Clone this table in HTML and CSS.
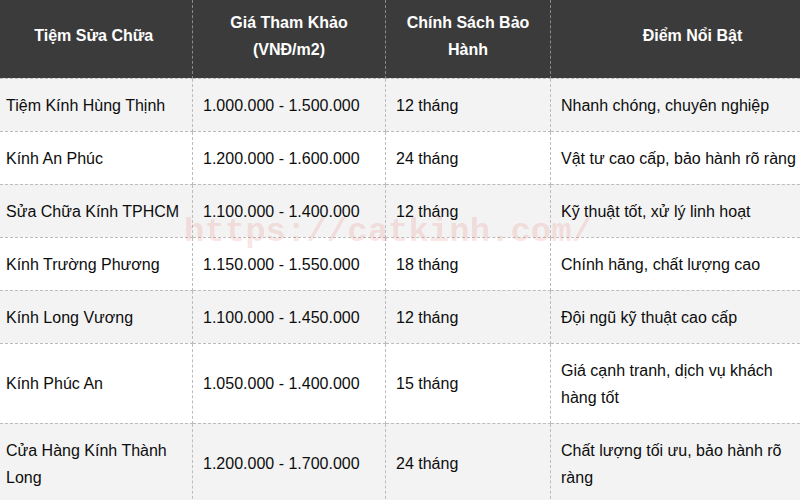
FILE: index.html
```html
<!DOCTYPE html>
<html lang="vi">
<head>
<meta charset="utf-8">
<link rel="stylesheet" href="styles.css">
</head>
<body>
<div class="wrap">
<table class="tbl">
  <colgroup>
    <col class="c1"><col class="c2"><col class="c3"><col class="c4">
  </colgroup>
  <thead>
    <tr>
      <th>Tiệm Sửa Chữa</th>
      <th>Giá Tham Khảo<br>(VNĐ/m2)</th>
      <th>Chính Sách Bảo<br>Hành</th>
      <th>Điểm Nổi Bật</th>
    </tr>
  </thead>
  <tbody>
    <tr><td>Tiệm Kính Hùng Thịnh</td><td>1.000.000 - 1.500.000</td><td>12 tháng</td><td>Nhanh chóng, chuyên nghiệp</td></tr>
    <tr><td>Kính An Phúc</td><td>1.200.000 - 1.600.000</td><td>24 tháng</td><td>Vật tư cao cấp, bảo hành rõ ràng</td></tr>
    <tr><td>Sửa Chữa Kính TPHCM</td><td>1.100.000 - 1.400.000</td><td>12 tháng</td><td>Kỹ thuật tốt, xử lý linh hoạt</td></tr>
    <tr><td>Kính Trường Phương</td><td>1.150.000 - 1.550.000</td><td>18 tháng</td><td>Chính hãng, chất lượng cao</td></tr>
    <tr><td>Kính Long Vương</td><td>1.100.000 - 1.450.000</td><td>12 tháng</td><td>Đội ngũ kỹ thuật cao cấp</td></tr>
    <tr><td>Kính Phúc An</td><td>1.050.000 - 1.400.000</td><td>15 tháng</td><td>Giá cạnh tranh, dịch vụ khách<br>hàng tốt</td></tr>
    <tr><td>Cửa Hàng Kính Thành<br>Long</td><td>1.200.000 - 1.700.000</td><td>24 tháng</td><td>Chất lượng tối ưu, bảo hành rõ<br>ràng</td></tr>
  </tbody>
</table>
<div class="watermark">https://catkinh.com/</div>
</div>
</body>
</html>
```

FILE: styles.css
```css
html, body {
  margin: 0;
  padding: 0;
  background: #ffffff;
  overflow: hidden;
}
.wrap {
  position: relative;
  width: 800px;
  height: 500px;
  overflow: hidden;
}
.tbl {
  margin-left: -5px;
  width: 839px;
  border-collapse: collapse;
  table-layout: fixed;
  font-family: "Liberation Sans", Arial, sans-serif;
  font-size: 16px;
  line-height: 27px;
  color: #0d0d0d;
}
.c1 { width: 197px; }
.c2 { width: 193px; }
.c3 { width: 165px; }
.c4 { width: 284px; }
.tbl th {
  background: #3b3b3b;
  color: #ffffff;
  font-weight: bold;
  text-align: center;
  vertical-align: middle;
  height: 78px;
  box-sizing: border-box;
  padding: 4px 10px 10px 10px;
  border-right: 1px dashed #8a8a8a;
  border-bottom: 1px dashed #bdbdbd;
}
.tbl td {
  padding: 13px 10px 12px 10px;
  vertical-align: middle;
  text-align: left;
  border: 1px dashed #bcbcbc;
  white-space: nowrap;
}
.tbl tbody tr:nth-child(odd) td {
  background: #f3f3f3;
}
.tbl tbody tr:nth-child(even) td {
  background: #ffffff;
}
.watermark {
  position: absolute;
  left: 184px;
  top: 212px;
  font-family: "Liberation Mono", "Courier New", monospace;
  font-weight: bold;
  font-size: 34px;
  line-height: 40px;
  color: rgba(230, 60, 60, 0.14);
  pointer-events: none;
  white-space: nowrap;
}
```
